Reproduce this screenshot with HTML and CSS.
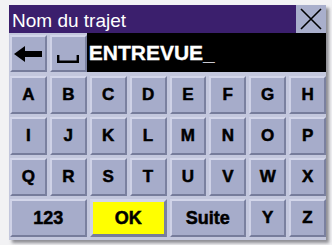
FILE: index.html
```html
<!DOCTYPE html>
<html>
<head>
<meta charset="utf-8">
<link rel="stylesheet" href="styles.css">
</head>
<body>
<div class="screen">
  <div class="titlebar">
    <div class="title">Nom du trajet</div>
    <div class="close">
      <svg width="22" height="22" viewBox="0 0 22 22"><path d="M1 1 L21 21 M21 1 L1 21" stroke="#000" stroke-width="1.6" fill="none"/></svg>
    </div>
  </div>
  <div class="inputrow">
    <div class="key">
      <svg width="28" height="16" viewBox="0 0 28 16"><polygon points="0,8 11,0 11,16" fill="#000"/><rect x="10" y="5" width="18" height="6" fill="#000"/></svg>
    </div>
    <div class="key space">
      <svg width="22" height="8" viewBox="0 0 22 8"><path d="M1.2 0 V6.8 H20.8 V0" stroke="#000" stroke-width="2.4" fill="none"/></svg>
    </div>
    <div class="field">ENTREVUE<span class="cursor">_</span></div>
  </div>
  <div class="keyboard">
    <div class="key">A</div><div class="key">B</div><div class="key">C</div><div class="key">D</div>
    <div class="key">E</div><div class="key">F</div><div class="key">G</div><div class="key">H</div>
    <div class="key">I</div><div class="key">J</div><div class="key">K</div><div class="key">L</div>
    <div class="key">M</div><div class="key">N</div><div class="key">O</div><div class="key">P</div>
    <div class="key">Q</div><div class="key">R</div><div class="key">S</div><div class="key">T</div>
    <div class="key">U</div><div class="key">V</div><div class="key">W</div><div class="key">X</div>
    <div class="key wide">123</div>
    <div class="key wide ok">OK</div>
    <div class="key wide">Suite</div>
    <div class="key">Y</div><div class="key">Z</div>
  </div>
</div>
</body>
</html>
```
FILE: styles.css
```css
html, body {
  margin: 0;
  padding: 0;
}
body {
  width: 332px;
  height: 245px;
  background: #f2f2f4;
  overflow: hidden;
  font-family: "Liberation Sans", Arial, sans-serif;
}
.screen {
  margin: 5px 0 0 9px;
  width: 317px;
  height: 235px;
  background: #c3c7dd;
  box-shadow: 3px 3px 3px rgba(60, 60, 70, 0.55);
}
.titlebar {
  height: 28px;
  display: flex;
  background: #3b1f6d;
}
.title {
  flex: 1;
  color: #fff;
  font-size: 19px;
  line-height: 28px;
  padding: 2px 0 0 3px;
  box-sizing: border-box;
}
.close {
  width: 30px;
  height: 28px;
  background: #a9afcc;
  display: flex;
  align-items: center;
  justify-content: center;
}
.inputrow {
  display: grid;
  grid-template-columns: repeat(8, 1fr);
  column-gap: 3px;
  padding-left: 1px;
  height: 40px;
  margin-bottom: 3px;
}
.inputrow .key {
  margin-top: 2px;
  height: 37px;
}
.field {
  grid-column: 3 / -1;
  margin-left: -3px;
  height: 39px;
  background: #000;
  color: #fff;
  font-weight: bold;
  font-size: 21px;
  display: flex;
  align-items: center;
  padding-left: 2px;
  padding-top: 1px;
  box-sizing: border-box;
  -webkit-text-stroke: 0.3px #fff;
}
.cursor {
  color: #c8c8d0;
  -webkit-text-stroke: 0;
}
.keyboard {
  display: grid;
  grid-template-columns: repeat(8, 1fr);
  grid-auto-rows: 38px;
  gap: 3px;
  padding-left: 1px;
}
.key {
  box-sizing: border-box;
  background: #a6acca;
  border: 2px solid;
  border-color: #d3d6ea #7a809f #767c9b #cfd2e7;
  display: flex;
  align-items: center;
  justify-content: center;
  font-weight: bold;
  font-size: 17px;
  color: #000;
  -webkit-text-stroke: 0.5px #000;
}
.space {
  padding-top: 10px;
}
.wide {
  grid-column: span 2;
  font-size: 18px;
}
.ok {
  background: #ffff00;
  border-width: 3px;
}
```
